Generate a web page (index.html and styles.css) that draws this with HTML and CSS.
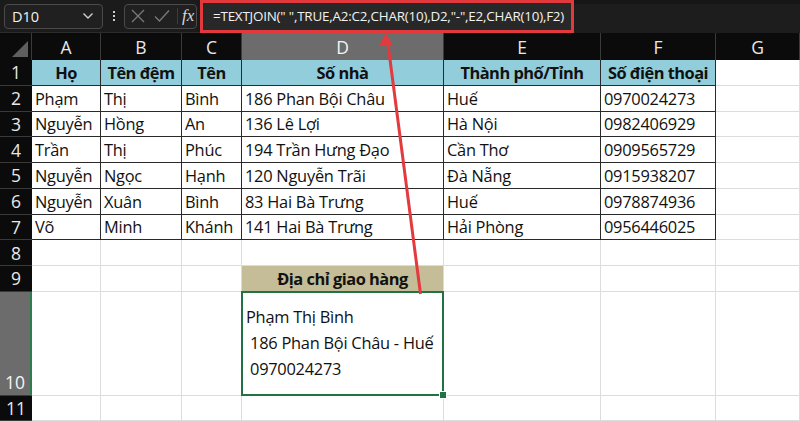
FILE: index.html
```html
<!DOCTYPE html>
<html lang="vi">
<head>
<meta charset="utf-8">
<title>Excel TEXTJOIN</title>
<link rel="stylesheet" href="styles.css">
</head>
<body>
<div class="app">
  <div class="toolbar">
    <div class="namebox">
      <span class="nb-text">D10</span>
      <svg class="chev" width="12" height="8" viewBox="0 0 12 8"><path d="M1.5 1.5 L6 6 L10.5 1.5" fill="none" stroke="#d0d0d0" stroke-width="1.4"/></svg>
    </div>
    <div class="dots"><span></span><span></span><span></span></div>
    <div class="fxbox">
      <svg width="18" height="18" viewBox="0 0 18 18"><path d="M3 3 L15 15 M15 3 L3 15" stroke="#7a7a7a" stroke-width="1.3" fill="none"/></svg>
      <svg width="18" height="18" viewBox="0 0 18 18"><path d="M2 9.5 L6.5 14 L16 3.5" stroke="#7a7a7a" stroke-width="1.3" fill="none"/></svg>
      <span class="sep"></span>
      <span class="fx">fx</span>
    </div>
    <div class="formula">=TEXTJOIN(" ",TRUE,A2:C2,CHAR(10),D2,"-",E2,CHAR(10),F2)</div>
    <div class="tb-rest"></div>
  </div>

  <div class="sheet">
    <div class="corner"><span class="tri"></span></div>
    <div class="ch">A</div><div class="ch">B</div><div class="ch">C</div><div class="ch sel">D</div><div class="ch">E</div><div class="ch">F</div><div class="ch">G</div>

    <div class="rh">1</div>
    <div class="c t hd">Họ</div><div class="c t hd">Tên đệm</div><div class="c t hd">Tên</div><div class="c t hd">Số nhà</div><div class="c t hd">Thành phố/Tỉnh</div><div class="c t hd">Số điện thoại</div><div class="c"></div>

    <div class="rh">2</div>
    <div class="c t">Phạm</div><div class="c t">Thị</div><div class="c t">Bình</div><div class="c t">186 Phan Bội Châu</div><div class="c t">Huế</div><div class="c t">0970024273</div><div class="c"></div>

    <div class="rh">3</div>
    <div class="c t">Nguyễn</div><div class="c t">Hồng</div><div class="c t">An</div><div class="c t">136 Lê Lợi</div><div class="c t">Hà Nội</div><div class="c t">0982406929</div><div class="c"></div>

    <div class="rh">4</div>
    <div class="c t">Trần</div><div class="c t">Thị</div><div class="c t">Phúc</div><div class="c t">194 Trần Hưng Đạo</div><div class="c t">Cần Thơ</div><div class="c t">0909565729</div><div class="c"></div>

    <div class="rh">5</div>
    <div class="c t">Nguyễn</div><div class="c t">Ngọc</div><div class="c t">Hạnh</div><div class="c t">120 Nguyễn Trãi</div><div class="c t">Đà Nẵng</div><div class="c t">0915938207</div><div class="c"></div>

    <div class="rh">6</div>
    <div class="c t">Nguyễn</div><div class="c t">Xuân</div><div class="c t">Bình</div><div class="c t">83 Hai Bà Trưng</div><div class="c t">Huế</div><div class="c t">0978874936</div><div class="c"></div>

    <div class="rh">7</div>
    <div class="c t">Võ</div><div class="c t">Minh</div><div class="c t">Khánh</div><div class="c t">141 Hai Bà Trưng</div><div class="c t">Hải Phòng</div><div class="c t">0956446025</div><div class="c"></div>

    <div class="rh">8</div>
    <div class="c"></div><div class="c"></div><div class="c"></div><div class="c"></div><div class="c"></div><div class="c"></div><div class="c"></div>

    <div class="rh">9</div>
    <div class="c"></div><div class="c"></div><div class="c"></div><div class="c tan">Địa chỉ giao hàng</div><div class="c"></div><div class="c"></div><div class="c"></div>

    <div class="rh selr">10</div>
    <div class="c"></div><div class="c"></div><div class="c"></div>
    <div class="c active"><div class="ml">Phạm Thị Bình<br>&nbsp;186 Phan Bội Châu - Huế<br>&nbsp;0970024273</div></div>
    <div class="c"></div><div class="c"></div><div class="c"></div>

    <div class="rh">11</div>
    <div class="c"></div><div class="c"></div><div class="c"></div><div class="c"></div><div class="c"></div><div class="c"></div><div class="c"></div>
  </div>

  <svg class="arrow" width="800" height="421" viewBox="0 0 800 421">
    <line x1="420.5" y1="294" x2="388" y2="44" stroke="#e23a3d" stroke-width="3"/>
    <polygon points="386,33 379,46 393,46" fill="#e23a3d"/>
  </svg>
</div>
</body>
</html>
```

FILE: styles.css
```css
* { box-sizing: border-box; }
html, body { margin: 0; padding: 0; }
body {
  width: 800px;
  height: 421px;
  overflow: hidden;
  background: #ffffff;
  font-family: "Open Sans", "Noto Sans", sans-serif;
}
.app { position: relative; width: 800px; height: 421px; }

.toolbar {
  height: 33px;
  display: flex;
  align-items: center;
  background: #1b1b1b;
  border-bottom: 1px solid #2c2c2c;
}
.namebox {
  margin-left: 4px;
  width: 99px;
  height: 25px;
  border: 1px solid #4a4a4a;
  border-radius: 4px;
  background: #202020;
  display: flex;
  align-items: center;
  justify-content: space-between;
  padding: 0 8px 0 7px;
}
.nb-text { color: #f0f0f0; font-size: 14.5px; }
.dots {
  width: 20px;
  margin-left: 1px;
  display: flex;
  flex-direction: column;
  align-items: center;
  gap: 2px;
}
.dots span { width: 2px; height: 2px; background: #cfcfcf; }
.fxbox {
  width: 73px;
  height: 25px;
  border: 1px solid #4a4a4a;
  border-radius: 4px;
  background: #202020;
  display: flex;
  align-items: center;
  padding-left: 4px;
  gap: 6px;
}
.sep { width: 1px; height: 16px; background: #3c3c3c; }
.fx {
  color: #d8d8d8;
  font-family: "Liberation Serif", serif;
  font-style: italic;
  font-size: 17px;
  margin-left: -2px;
}
.formula {
  margin-left: 3px;
  width: 374px;
  height: 33px;
  border: 3px solid #e2393c;
  background: #282828;
  color: #f2f2f2;
  font-size: 13.4px;
  display: flex;
  align-items: center;
  padding-left: 10px;
  white-space: nowrap;
  overflow: hidden;
  letter-spacing: -0.2px;
}
.tb-rest { flex: 1; height: 33px; background: #1d1d1d; border-top: 4px solid #161616; }

.sheet {
  display: grid;
  grid-template-columns: 32px 69px 81px 60px 202px 157px 115px 1fr;
  grid-template-rows: 27px repeat(9, 25.75px) 104px 1fr;
  height: 388px;
}
.corner {
  background: #0b0b0b;
  border-right: 1px solid #3a3a3a;
  position: relative;
}
.tri {
  position: absolute;
  right: 3px;
  bottom: 3px;
  width: 0;
  height: 0;
  border-left: 16px solid transparent;
  border-bottom: 16px solid #5f5f5f;
}
.ch {
  background: #0b0b0b;
  color: #e8e8e8;
  font-size: 17.5px;
  display: flex;
  align-items: center;
  justify-content: center;
  border-right: 1px solid #3a3a3a;
}
.ch.sel { background: #6c6c6c; color: #f5f5f5; }
.rh {
  background: #0b0b0b;
  color: #e8e8e8;
  font-size: 17.5px;
  display: flex;
  align-items: center;
  justify-content: center;
  border-bottom: 1px solid #3a3a3a;
}
.rh.selr {
  background: #6c6c6c;
  color: #f5f5f5;
  align-items: flex-end;
  padding-bottom: 1px;
  border-right: 2px solid #2e7d4f;
}
.c {
  border-right: 1px solid #dcdcdc;
  border-bottom: 1px solid #dcdcdc;
  font-size: 16.4px;
  letter-spacing: -0.25px;
  color: #111;
  display: flex;
  align-items: flex-end;
  padding: 0 0 1px 3px;
  white-space: nowrap;
  line-height: 22px;
}
.c.t { border-right-color: #2a2a2a; border-bottom-color: #2a2a2a; }
.c.hd {
  background: #92cddc;
  font-weight: 700;
  letter-spacing: -0.5px;
  justify-content: center;
  padding-left: 0;
}
.c.tan {
  background: #c4bd97;
  font-weight: 700;
  letter-spacing: -0.5px;
  justify-content: center;
  padding-left: 0;
}
.c.active {
  position: relative;
  align-items: center;
  padding: 0 0 0 4px;
}
.c.active::before {
  content: "";
  position: absolute;
  left: -1px;
  top: -1px;
  right: -1px;
  bottom: -1px;
  border: 2px solid #217346;
}
.c.active::after {
  content: "";
  position: absolute;
  right: -4px;
  bottom: -4px;
  width: 6px;
  height: 6px;
  background: #217346;
  border: 1px solid #ffffff;
}
.ml { line-height: 26px; }

.arrow {
  position: absolute;
  left: 0;
  top: 0;
  pointer-events: none;
}
```
